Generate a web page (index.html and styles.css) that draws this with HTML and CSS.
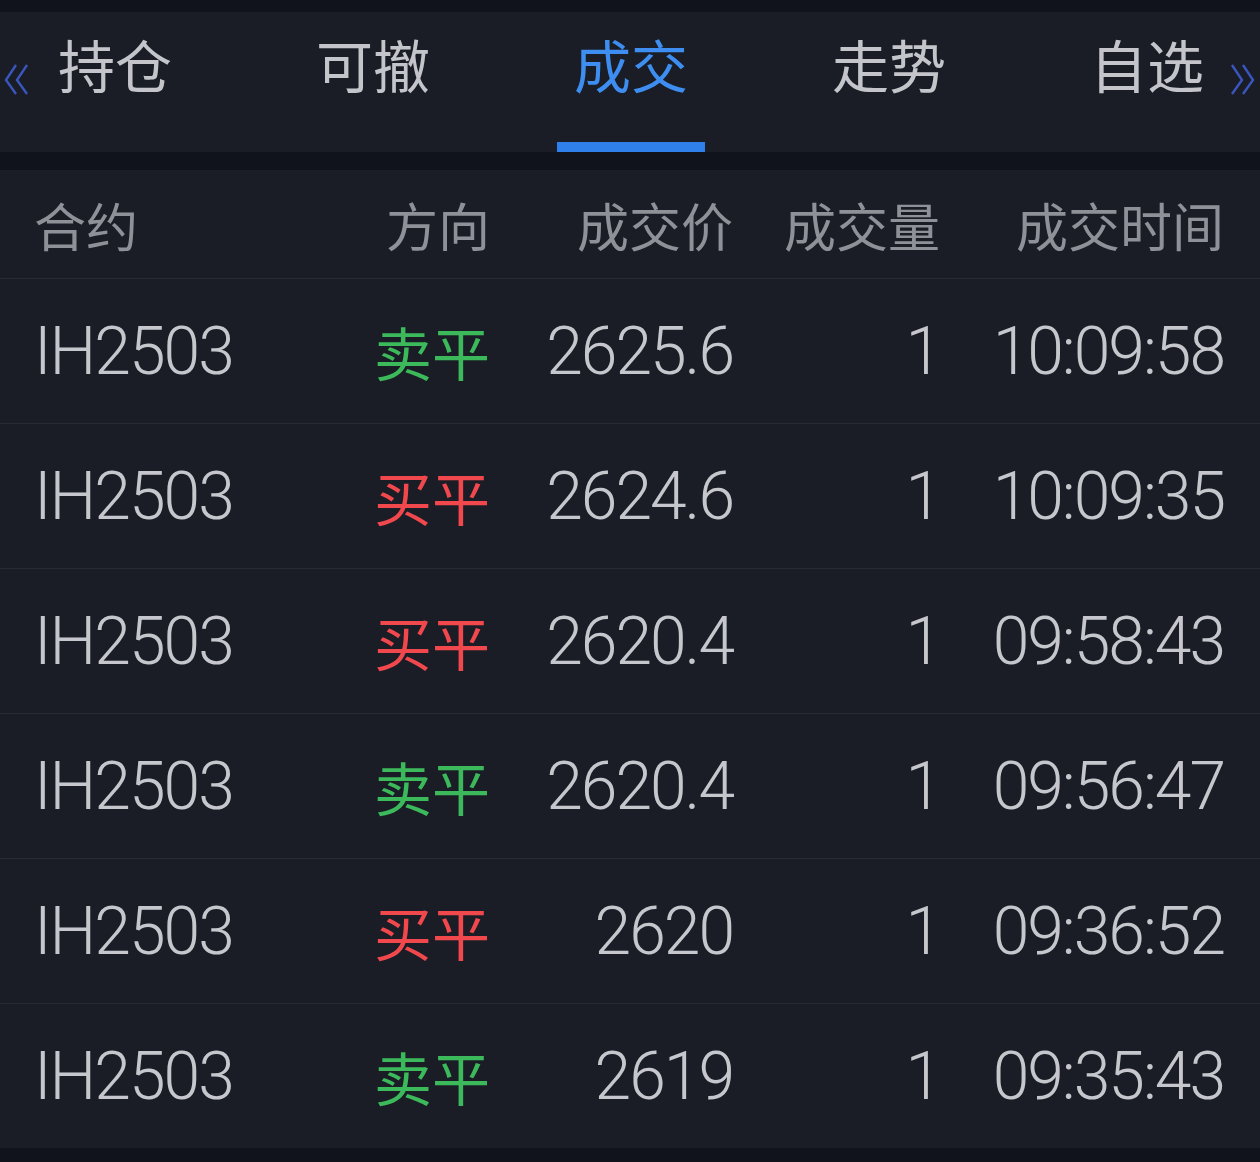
FILE: index.html
```html
<!DOCTYPE html>
<html lang="zh-CN">
<head>
<meta charset="UTF-8">
<meta name="viewport" content="width=device-width, initial-scale=1.0">
<title>成交</title>
<link rel="stylesheet" href="styles.css">
</head>
<body>
  <div class="topstrip"></div>

  <!-- tab bar -->
  <div class="tabbar">
    <svg class="arrow" width="27" height="32" viewBox="0 0 27 32">
      <path d="M13 2 L3 17 L13 31 M24 2 L14 17 L24 31" fill="none" stroke="#3956bd" stroke-width="2.4"/>
    </svg>
    <div class="tabs">
      <div class="tab">持仓</div>
      <div class="tab">可撤</div>
      <div class="tab active">成交</div>
      <div class="tab">走势</div>
      <div class="tab">自选</div>
    </div>
    <svg class="arrow" width="27" height="32" viewBox="0 0 27 32">
      <path d="M3 2 L13 17 L3 31 M14 2 L24 17 L14 31" fill="none" stroke="#3956bd" stroke-width="2.4"/>
    </svg>
  </div>

  <div class="gap"></div>

  <div class="table">
    <div class="row head">
      <div>合约</div>
      <div class="r">方向</div>
      <div class="r">成交价</div>
      <div class="r">成交量</div>
      <div class="r">成交时间</div>
    </div>
    <div class="row">
      <div class="num">IH2503</div>
      <div class="r dir sell">卖平</div>
      <div class="r num">2625.6</div>
      <div class="r num">1</div>
      <div class="r num">10:09:58</div>
    </div>
    <div class="row">
      <div class="num">IH2503</div>
      <div class="r dir buy">买平</div>
      <div class="r num">2624.6</div>
      <div class="r num">1</div>
      <div class="r num">10:09:35</div>
    </div>
    <div class="row">
      <div class="num">IH2503</div>
      <div class="r dir buy">买平</div>
      <div class="r num">2620.4</div>
      <div class="r num">1</div>
      <div class="r num">09:58:43</div>
    </div>
    <div class="row">
      <div class="num">IH2503</div>
      <div class="r dir sell">卖平</div>
      <div class="r num">2620.4</div>
      <div class="r num">1</div>
      <div class="r num">09:56:47</div>
    </div>
    <div class="row">
      <div class="num">IH2503</div>
      <div class="r dir buy">买平</div>
      <div class="r num">2620</div>
      <div class="r num">1</div>
      <div class="r num">09:36:52</div>
    </div>
    <div class="row">
      <div class="num">IH2503</div>
      <div class="r dir sell">卖平</div>
      <div class="r num">2619</div>
      <div class="r num">1</div>
      <div class="r num">09:35:43</div>
    </div>
  </div>
</body>
</html>
```

FILE: styles.css
```css
body {
  margin: 0;
  padding: 0;
  background-color: #10131b;
  font-family: "Noto Sans CJK SC", sans-serif;
  color: #c4c6cb;
}

.topstrip {
  height: 12px;
}

/* tab bar */
.tabbar {
  display: flex;
  height: 140px;
  padding: 0 4px 0 3px;
  background-color: #1a1d26;
}

.arrow {
  margin-top: 51px;
  flex: none;
}

.tabs {
  flex: 1;
  display: flex;
  justify-content: space-between;
  padding: 0 25px 0 28px;
}

.tab {
  position: relative;
  padding-top: 21px;
  height: 119px;
  font-size: 57px;
  line-height: 60px;
  color: #c3c5ca;
}

.tab.active {
  color: #3d8ef0;
}

.tab.active::after {
  content: "";
  position: absolute;
  left: -17px;
  right: -17px;
  bottom: 0;
  height: 10px;
  background-color: #2f80ea;
}

.gap {
  height: 18px;
}

/* table */
.table {
  background-color: #1a1d26;
}

.row {
  display: grid;
  grid-template-columns: 266px 190px 243px 207px 284px;
  align-items: center;
  height: 144px;
  padding-left: 34px;
  border-top: 1px solid #272a33;
}

.row.head {
  height: 108px;
  border-top: none;
  font-size: 52px;
  color: #8e9198;
}

.r {
  text-align: right;
}

.num {
  font-family: Roboto, "Noto Sans CJK SC", sans-serif;
  font-weight: 300;
  font-size: 66px;
  letter-spacing: -2px;
  color: #c5c7cc;
}

.dir {
  font-size: 58px;
}

.sell {
  color: #3cb95a;
}

.buy {
  color: #f0484c;
}
```
